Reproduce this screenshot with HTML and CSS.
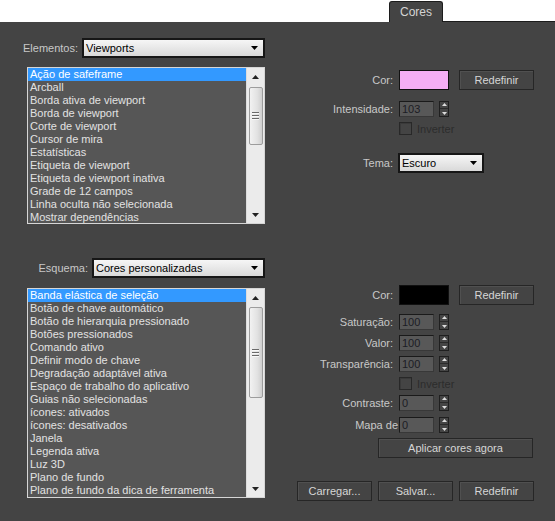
FILE: index.html
```html
<!DOCTYPE html>
<html lang="pt">
<head>
<meta charset="utf-8">
<title>Cores</title>
<link rel="stylesheet" href="styles.css">
</head>
<body>
<div class="tabs">
  <div class="tab-gap"></div>
  <div class="tab">Cores</div>
  <div class="tab-rest"></div>
</div>
<div class="panel">
  <section class="sec sec1">
    <div class="left">
      <div class="field-row">
        <span class="lbl">Elementos:</span>
        <div class="combo combo-el"><span>Viewports</span><svg class="arr" width="7" height="4" viewBox="0 0 7 4"><polygon points="0,0 7,0 3.5,4" fill="#000"/></svg></div>
      </div>
      <div class="list list1">
        <div class="items">
          <div class="item sel">Ação de safeframe</div>
          <div class="item">Arcball</div>
          <div class="item">Borda ativa de viewport</div>
          <div class="item">Borda de viewport</div>
          <div class="item">Corte de viewport</div>
          <div class="item">Cursor de mira</div>
          <div class="item">Estatísticas</div>
          <div class="item">Etiqueta de viewport</div>
          <div class="item">Etiqueta de viewport inativa</div>
          <div class="item">Grade de 12 campos</div>
          <div class="item">Linha oculta não selecionada</div>
          <div class="item">Mostrar dependências</div>
        </div>
        <div class="sb">
          <div class="sb-btn"><svg width="7" height="4" viewBox="0 0 7 4"><polygon points="0,4 7,4 3.5,0" fill="#222"/></svg></div>
          <div class="thumb thumb1"><span class="grip"></span><span class="grip"></span><span class="grip"></span></div>
          <div class="sb-fill"></div>
          <div class="sb-btn"><svg width="7" height="4" viewBox="0 0 7 4"><polygon points="0,0 7,0 3.5,4" fill="#222"/></svg></div>
        </div>
      </div>
    </div>
    <div class="right right1">
      <div class="row">
        <span class="lbl rl">Cor:</span>
        <div class="swatch pink"></div>
        <button class="btn btn-sm">Redefinir</button>
      </div>
      <div class="row mt11">
        <span class="lbl rl">Intensidade:</span>
        <div class="spin"><div class="inp">103</div><div class="arrows"><svg width="5" height="3" viewBox="0 0 5 3"><polygon points="0,3 5,3 2.5,0" fill="#ddd"/></svg><span class="sep"></span><svg width="5" height="3" viewBox="0 0 5 3"><polygon points="0,0 5,0 2.5,3" fill="#ddd"/></svg></div></div>
      </div>
      <div class="row mt5 chk-row">
        <span class="chk"></span><span class="chk-lbl">Inverter</span>
      </div>
      <div class="row mt18">
        <span class="lbl rl rl-tema">Tema:</span>
        <div class="combo combo-tema"><span>Escuro</span><svg class="arr" width="7" height="4" viewBox="0 0 7 4"><polygon points="0,0 7,0 3.5,4" fill="#000"/></svg></div>
      </div>
    </div>
  </section>

  <section class="sec sec2">
    <div class="left">
      <div class="field-row">
        <span class="lbl">Esquema:</span>
        <div class="combo combo-es"><span>Cores personalizadas</span><svg class="arr" width="7" height="4" viewBox="0 0 7 4"><polygon points="0,0 7,0 3.5,4" fill="#000"/></svg></div>
      </div>
      <div class="list list2">
        <div class="items">
          <div class="item sel">Banda elástica de seleção</div>
          <div class="item">Botão de chave automático</div>
          <div class="item">Botão de hierarquia pressionado</div>
          <div class="item">Botões pressionados</div>
          <div class="item">Comando ativo</div>
          <div class="item">Definir modo de chave</div>
          <div class="item">Degradação adaptável ativa</div>
          <div class="item">Espaço de trabalho do aplicativo</div>
          <div class="item">Guias não selecionadas</div>
          <div class="item">ícones: ativados</div>
          <div class="item">ícones: desativados</div>
          <div class="item">Janela</div>
          <div class="item">Legenda ativa</div>
          <div class="item">Luz 3D</div>
          <div class="item">Plano de fundo</div>
          <div class="item">Plano de fundo da dica de ferramenta</div>
        </div>
        <div class="sb">
          <div class="sb-btn"><svg width="7" height="4" viewBox="0 0 7 4"><polygon points="0,4 7,4 3.5,0" fill="#222"/></svg></div>
          <div class="thumb thumb2"><span class="grip"></span><span class="grip"></span><span class="grip"></span></div>
          <div class="sb-fill"></div>
          <div class="sb-btn"><svg width="7" height="4" viewBox="0 0 7 4"><polygon points="0,0 7,0 3.5,4" fill="#222"/></svg></div>
        </div>
      </div>
    </div>
    <div class="right right2">
      <div class="row">
        <span class="lbl rl">Cor:</span>
        <div class="swatch black"></div>
        <button class="btn btn-sm">Redefinir</button>
      </div>
      <div class="row mt9">
        <span class="lbl rl">Saturação:</span>
        <div class="spin"><div class="inp">100</div><div class="arrows"><svg width="5" height="3" viewBox="0 0 5 3"><polygon points="0,3 5,3 2.5,0" fill="#ddd"/></svg><span class="sep"></span><svg width="5" height="3" viewBox="0 0 5 3"><polygon points="0,0 5,0 2.5,3" fill="#ddd"/></svg></div></div>
      </div>
      <div class="row mt5">
        <span class="lbl rl">Valor:</span>
        <div class="spin"><div class="inp">100</div><div class="arrows"><svg width="5" height="3" viewBox="0 0 5 3"><polygon points="0,3 5,3 2.5,0" fill="#ddd"/></svg><span class="sep"></span><svg width="5" height="3" viewBox="0 0 5 3"><polygon points="0,0 5,0 2.5,3" fill="#ddd"/></svg></div></div>
      </div>
      <div class="row mt5">
        <span class="lbl rl">Transparência:</span>
        <div class="spin"><div class="inp">100</div><div class="arrows"><svg width="5" height="3" viewBox="0 0 5 3"><polygon points="0,3 5,3 2.5,0" fill="#ddd"/></svg><span class="sep"></span><svg width="5" height="3" viewBox="0 0 5 3"><polygon points="0,0 5,0 2.5,3" fill="#ddd"/></svg></div></div>
      </div>
      <div class="row mt5 chk-row">
        <span class="chk"></span><span class="chk-lbl">Inverter</span>
      </div>
      <div class="row mt5">
        <span class="lbl rl">Contraste:</span>
        <div class="spin"><div class="inp">0</div><div class="arrows"><svg width="5" height="3" viewBox="0 0 5 3"><polygon points="0,3 5,3 2.5,0" fill="#ddd"/></svg><span class="sep"></span><svg width="5" height="3" viewBox="0 0 5 3"><polygon points="0,0 5,0 2.5,3" fill="#ddd"/></svg></div></div>
      </div>
      <div class="row mt6">
        <span class="lbl rl rl-tight">Mapa de</span>
        <div class="spin"><div class="inp">0</div><div class="arrows"><svg width="5" height="3" viewBox="0 0 5 3"><polygon points="0,3 5,3 2.5,0" fill="#ddd"/></svg><span class="sep"></span><svg width="5" height="3" viewBox="0 0 5 3"><polygon points="0,0 5,0 2.5,3" fill="#ddd"/></svg></div></div>
      </div>
      <div class="row mt5">
        <button class="btn btn-apply">Aplicar cores agora</button>
      </div>
      <div class="row mt23 btn-row">
        <button class="btn btn-sm">Carregar...</button>
        <button class="btn btn-sm">Salvar...</button>
        <button class="btn btn-sm">Redefinir</button>
      </div>
    </div>
  </section>
</div>
</body>
</html>
```
FILE: styles.css
```css
html, body {
  margin: 0;
  padding: 0;
  background: #ffffff;
}
body {
  font-family: "Liberation Sans", Arial, sans-serif;
  font-size: 11px;
  width: 555px;
  height: 521px;
  overflow: hidden;
}
.tabs {
  display: flex;
  height: 22px;
  align-items: flex-end;
}
.tab-gap {
  width: 389px;
  height: 22px;
}
.tab {
  width: 52px;
  height: 20px;
  background: #444444;
  border: 1px solid #1c1c1c;
  border-bottom: none;
  border-radius: 3px 3px 0 0;
  color: #d4d4d4;
  font-size: 12px;
  line-height: 20px;
  text-align: center;
  box-sizing: content-box;
}
.tab-rest {
  flex: 1;
  height: 21px;
  border-bottom: 1px solid #1c1c1c;
}
.panel {
  background: #444444;
  height: 499px;
  padding-top: 16px;
  box-sizing: border-box;
}
.sec {
  display: flex;
  align-items: flex-start;
}
.sec2 {
  margin-top: 34px;
}
.left {
  margin-left: 23px;
  width: 242px;
  display: flex;
  flex-direction: column;
}
.field-row {
  display: flex;
  justify-content: flex-end;
  align-items: center;
  gap: 4px;
  height: 20px;
}
.lbl {
  color: #c8c8c8;
  white-space: nowrap;
}
.combo {
  height: 20px;
  box-sizing: border-box;
  border: 2px solid #161616;
  background: linear-gradient(#f6f6f6, #d9d9d9);
  color: #000;
  display: flex;
  align-items: center;
  justify-content: space-between;
  padding: 0 5px 0 2px;
}
.combo-el { width: 185px; }
.combo-es { width: 173px; }
.combo-tema { width: 86px; }
.list {
  margin-left: 4px;
  width: 238px;
  box-sizing: border-box;
  border: 1px solid #d6d6d6;
  background: #565656;
  display: flex;
  overflow: hidden;
}
.list1 { height: 157px; margin-top: 9px; }
.list2 { height: 210px; margin-top: 10px; }
.items {
  flex: 1;
  overflow: hidden;
}
.item {
  height: 13px;
  line-height: 13px;
  padding-left: 2px;
  color: #e2e2e2;
  white-space: nowrap;
}
.item.sel {
  background: #3399ff;
  color: #ffffff;
}
.sb {
  width: 17px;
  background: #ebebeb;
  border-left: 1px solid #dcdcdc;
  display: flex;
  flex-direction: column;
  align-items: center;
}
.sb-btn {
  height: 17px;
  width: 17px;
  display: flex;
  align-items: center;
  justify-content: center;
}
.sb-fill { flex: 1; }
.thumb {
  width: 14px;
  box-sizing: border-box;
  border: 1px solid #9c9c9c;
  border-radius: 2px;
  background: linear-gradient(90deg, #f2f2f2, #e2e2e2 60%, #cfcfcf);
  display: flex;
  flex-direction: column;
  align-items: center;
  justify-content: center;
  gap: 1px;
}
.thumb1 { height: 58px; margin-top: 2px; }
.thumb2 { height: 91px; margin-top: 1px; }
.grip {
  width: 7px;
  height: 1px;
  background: #6a6a6a;
  border-bottom: 1px solid #f8f8f8;
}
.right {
  margin-left: 32px;
  width: 237px;
  display: flex;
  flex-direction: column;
}
.right1 { padding-top: 32px; }
.right2 { padding-top: 27px; }
.row {
  display: flex;
  align-items: center;
}
.mt5 { margin-top: 5px; }
.mt6 { margin-top: 6px; }
.mt9 { margin-top: 9px; }
.mt11 { margin-top: 11px; }
.mt18 { margin-top: 18px; }
.mt23 { margin-top: 23px; }
.rl {
  width: 96px;
  text-align: right;
  margin-right: 6px;
}
.rl-tema {
  margin-right: 5px;
}
.rl-tight {
  width: 101px;
  margin-right: 1px;
}
.swatch {
  width: 50px;
  height: 20px;
  box-sizing: border-box;
  border: 1px solid #111;
}
.pink { background: #f5aef5; }
.black { background: #000000; }
.btn {
  height: 20px;
  box-sizing: border-box;
  background: #444444;
  border: 1px solid #262626;
  box-shadow: inset 1px 1px 0 #505050;
  color: #d6d6d6;
  font-family: "Liberation Sans", Arial, sans-serif;
  font-size: 11px;
  padding: 0;
  cursor: default;
}
.btn-sm { width: 75px; }
.right .row > .btn-sm { margin-left: 10px; }
.btn-row .btn-sm { margin-left: 0 !important; }
.btn-row { gap: 6px; }
.btn-apply {
  width: 155px;
  margin-left: 81px;
}
.spin {
  display: flex;
  align-items: center;
  gap: 5px;
  height: 16px;
}
.inp {
  width: 35px;
  height: 16px;
  box-sizing: border-box;
  border: 1px solid #1a1a1a;
  border-right-color: #383838;
  border-bottom-color: #383838;
  background: #585858;
  color: #1c1c24;
  line-height: 14px;
  padding-left: 2px;
}
.arrows {
  width: 10px;
  height: 16px;
  box-sizing: border-box;
  border: 1px solid #1f1f1f;
  background: #454545;
  display: flex;
  flex-direction: column;
  align-items: center;
  justify-content: space-around;
}
.sep {
  width: 8px;
  height: 1px;
  background: #2a2a2a;
}
.chk-row {
  padding-left: 102px;
  height: 13px;
}
.chk {
  width: 13px;
  height: 13px;
  box-sizing: border-box;
  border: 1px solid #282828;
  box-shadow: inset 1px 1px 0 #3a3a3a;
  background: #444;
}
.chk-lbl {
  margin-left: 5px;
  color: #2c2c2c;
}
```
